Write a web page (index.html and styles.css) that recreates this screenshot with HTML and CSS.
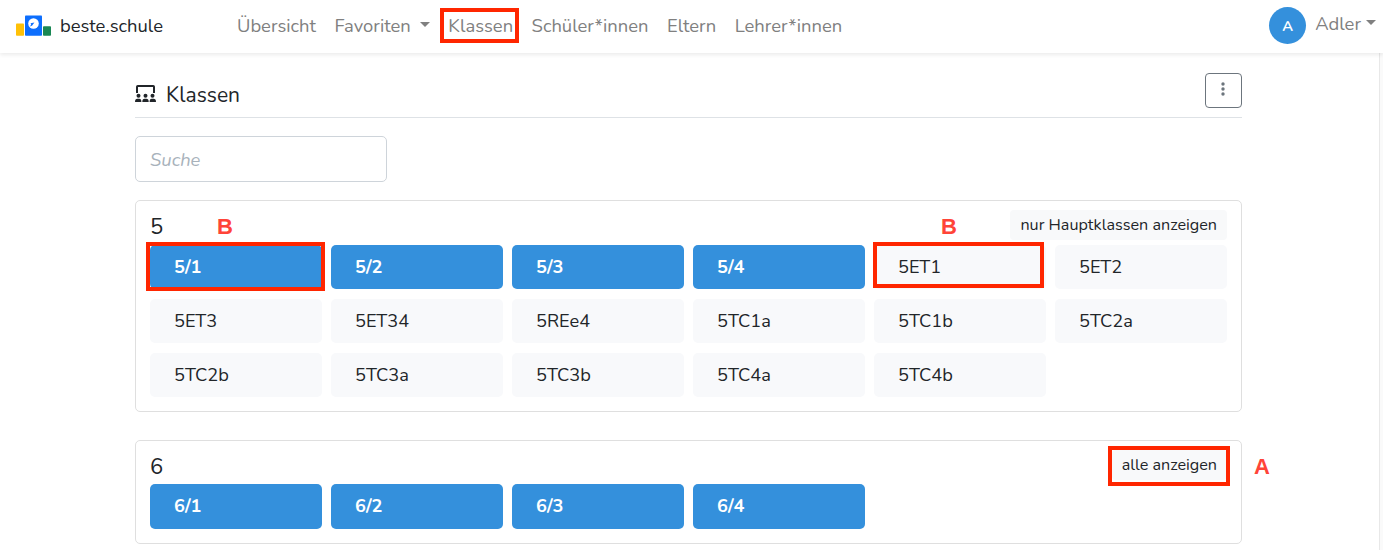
FILE: index.html
```
<!DOCTYPE html>
<html lang="de">
<head>
  <meta charset="UTF-8">
  <title>Klassen - beste.schule</title>
  <link rel="stylesheet" href="styles.css">
</head>
<body>
  <nav class="navbar">
    <a class="brand" href="#">
      <svg class="logo" width="36" height="22" viewBox="0 0 36 22">
        <rect x="0" y="8.5" width="8" height="12.3" rx="0.8" fill="#ffc107"/>
        <rect x="9" y="0.5" width="17" height="20.3" rx="0.8" fill="#0d6efd"/>
        <rect x="27" y="11.3" width="8" height="9.5" rx="0.8" fill="#198754"/>
        <circle cx="17.5" cy="8.5" r="5.3" fill="#fff"/>
        <path d="M18.4 7.5L14.6 8.3L15.1 9.5L14 11.4L16.2 10.6Z" fill="#0d6efd"/>
      </svg>
      <span>beste.schule</span>
    </a>
    <div class="nav-links">
      <a href="#">Übersicht</a>
      <a href="#" class="dropdown">Favoriten</a>
      <a href="#" class="n-klassen marked">Klassen</a>
      <a href="#">Schüler*innen</a>
      <a href="#">Eltern</a>
      <a href="#">Lehrer*innen</a>
    </div>
    <div class="user">
      <span class="avatar">A</span>
      <a href="#" class="dropdown">Adler</a>
    </div>
  </nav>

  <main class="container">
    <header class="page-header">
      <svg class="title-icon" width="21" height="18" viewBox="0 0 21 18" fill="#212529">
        <path d="M1 8V1.8Q1 0 2.8 0H18.2Q20 0 20 1.8V8H18V2H3V8Z"/>
        <circle cx="3.5" cy="10.7" r="2"/>
        <circle cx="10.5" cy="10.7" r="2"/>
        <circle cx="17.5" cy="10.7" r="2"/>
        <path d="M0 17Q0 13.8 2.4 13.8H4.2Q6.4 13.8 6.4 17ZM7.3 17Q7.3 13.8 9.6 13.8H11.4Q13.7 13.8 13.7 17ZM14.6 17Q14.6 13.8 16.8 13.8H18.6Q21 13.8 21 17Z"/>
      </svg>
      <h1>Klassen</h1>
      <button class="menu-btn" aria-label="Menü">
        <svg width="4" height="14" viewBox="0 0 4 14" fill="#6c757d">
          <circle cx="2" cy="2" r="1.7"/>
          <circle cx="2" cy="7" r="1.7"/>
          <circle cx="2" cy="12" r="1.7"/>
        </svg>
      </button>
    </header>

    <input class="search" type="text" placeholder="Suche">

    <section class="card">
      <div class="card-head">
        <h2>5</h2>
        <button class="toggle">nur Hauptklassen anzeigen</button>
      </div>
      <div class="grid">
        <a href="#" class="tile primary marked">5/1</a>
        <a href="#" class="tile primary">5/2</a>
        <a href="#" class="tile primary">5/3</a>
        <a href="#" class="tile primary">5/4</a>
        <a href="#" class="tile marked">5ET1</a>
        <a href="#" class="tile">5ET2</a>
        <a href="#" class="tile">5ET3</a>
        <a href="#" class="tile">5ET34</a>
        <a href="#" class="tile">5REe4</a>
        <a href="#" class="tile">5TC1a</a>
        <a href="#" class="tile">5TC1b</a>
        <a href="#" class="tile">5TC2a</a>
        <a href="#" class="tile">5TC2b</a>
        <a href="#" class="tile">5TC3a</a>
        <a href="#" class="tile">5TC3b</a>
        <a href="#" class="tile">5TC4a</a>
        <a href="#" class="tile">5TC4b</a>
      </div>
      <span class="note note-b1">B</span>
      <span class="note note-b2">B</span>
    </section>

    <section class="card card-6">
      <div class="card-head">
        <h2>6</h2>
        <button class="toggle t-all marked">alle anzeigen</button>
      </div>
      <div class="grid">
        <a href="#" class="tile primary">6/1</a>
        <a href="#" class="tile primary">6/2</a>
        <a href="#" class="tile primary">6/3</a>
        <a href="#" class="tile primary">6/4</a>
      </div>
      <span class="note note-a">A</span>
    </section>
  </main>
</body>
</html>
```
FILE: styles.css
```
* {
  box-sizing: border-box;
}
html {
  height: 100%;
  overflow: hidden;
}
body {
  font-family: Nunito, 'Open Sans', 'Noto Sans', sans-serif;
  font-size: 18.4px;
  color: #212529;
  height: 100%;
  margin: 0;
  padding-right: 3px;
  background: linear-gradient(#e8e8e8, #e8e8e8) right 3px top / 1px 100% no-repeat, linear-gradient(#fafafa, #fafafa) right top / 3px 100% no-repeat, #fff;
}
a {
  color: inherit;
  text-decoration: none;
}
h1, h2 {
  margin: 0;
  font-weight: 400;
}
.navbar {
  position: relative;
  display: flex;
  align-items: center;
  height: 53px;
  margin-right: -3px;
  padding: 0 7px 2px 16px;
  background: #fff;
  box-shadow: 0 2px 4px rgba(0,0,0,0.08);
}
.brand {
  display: flex;
  align-items: center;
  width: 221px;
  gap: 8px;
}
.nav-links {
  display: flex;
  flex: 1;
  gap: 18.5px;
  color: #808080;
}
.nav-links a {
  white-space: nowrap;
}
.dropdown::after {
  content: "";
  display: inline-block;
  margin-left: 9px;
  vertical-align: 5px;
  border-top: 5px solid;
  border-left: 5px solid transparent;
  border-right: 5px solid transparent;
}
.user {
  display: flex;
  align-items: center;
  gap: 9px;
  color: #808080;
}
.user .dropdown {
  padding-bottom: 4px;
}
.user .dropdown::after {
  margin-left: 5px;
}
.avatar {
  width: 37px;
  height: 37px;
  border-radius: 50%;
  background: #3490dc;
  color: #fff;
  font-size: 14.5px;
  font-weight: 700;
  line-height: 38px;
  text-align: center;
}
.container {
  width: 1107px;
  margin-left: 135px;
}
.page-header {
  display: flex;
  align-items: center;
  height: 65px;
  padding-top: 10px;
  border-bottom: 1px solid #dee2e6;
}
.title-icon {
  margin-top: 8px;
}
.page-header h1 {
  flex: 1;
  margin: 9px 0 0 10px;
  font-size: 21px;
}
.menu-btn {
  width: 37px;
  height: 35px;
  padding: 0 1px 0 0;
  background: #fff;
  border: 1px solid #6c757d;
  border-radius: 4px;
}
.search {
  display: block;
  width: 252px;
  height: 46px;
  margin: 18px 0;
  padding: 0 14px;
  border: 1px solid #ced4da;
  border-radius: 5px;
  font: inherit;
}
.search::placeholder {
  color: #a8b2bb;
  font-style: italic;
}
.card {
  position: relative;
  height: 212px;
  margin-bottom: 28px;
  padding: 9px 14px;
  border: 1px solid #dfdfdf;
  border-radius: 5px;
}
.card-6 {
  height: 104px;
}
.card-head {
  display: flex;
  justify-content: space-between;
  height: 35px;
}
.card-head h2 {
  font-size: 22px;
  line-height: 35px;
}
.toggle {
  height: 30px;
  padding: 0 10px;
  border: 0;
  border-radius: 4px;
  background: #f8f9fa;
  color: #212529;
  font-family: inherit;
  font-size: 16.15px;
  white-space: nowrap;
}
.grid {
  display: grid;
  grid-template-columns: repeat(6, 172px);
  grid-auto-rows: 44px;
  gap: 10px 9px;
}
.card-6 .card-head {
  height: 34px;
}
.card-6 .grid {
  grid-auto-rows: 45px;
}
.tile {
  padding-left: 24px;
  border-radius: 5px;
  background: #f8f9fb;
  font-size: 18.2px;
  line-height: 44px;
}
.tile.primary {
  background: #3490dc;
  color: #fff;
  font-weight: 700;
  line-height: 45px;
}

/* red frames and letters */
.marked {
  position: relative;
}
.marked::before {
  content: "";
  position: absolute;
  border: 4px solid #ff2600;
}
.n-klassen::before {
  inset: -5px -6px -5px -8px;
}
.tile.marked::before {
  inset: -3px 2px 1px -1px;
}
.tile.primary.marked::before {
  inset: -3px -3px -2px -4px;
}
.t-all::before {
  inset: -4px -3px -6px -4px;
}
.note {
  position: absolute;
  color: #ff4438;
  font: bold 22px 'Liberation Sans', sans-serif;
}
.note-b1 {
  top: 13px;
  left: 81px;
}
.note-b2 {
  top: 13px;
  left: 805px;
}
.note-a {
  top: 13px;
  left: 1118px;
}
```
